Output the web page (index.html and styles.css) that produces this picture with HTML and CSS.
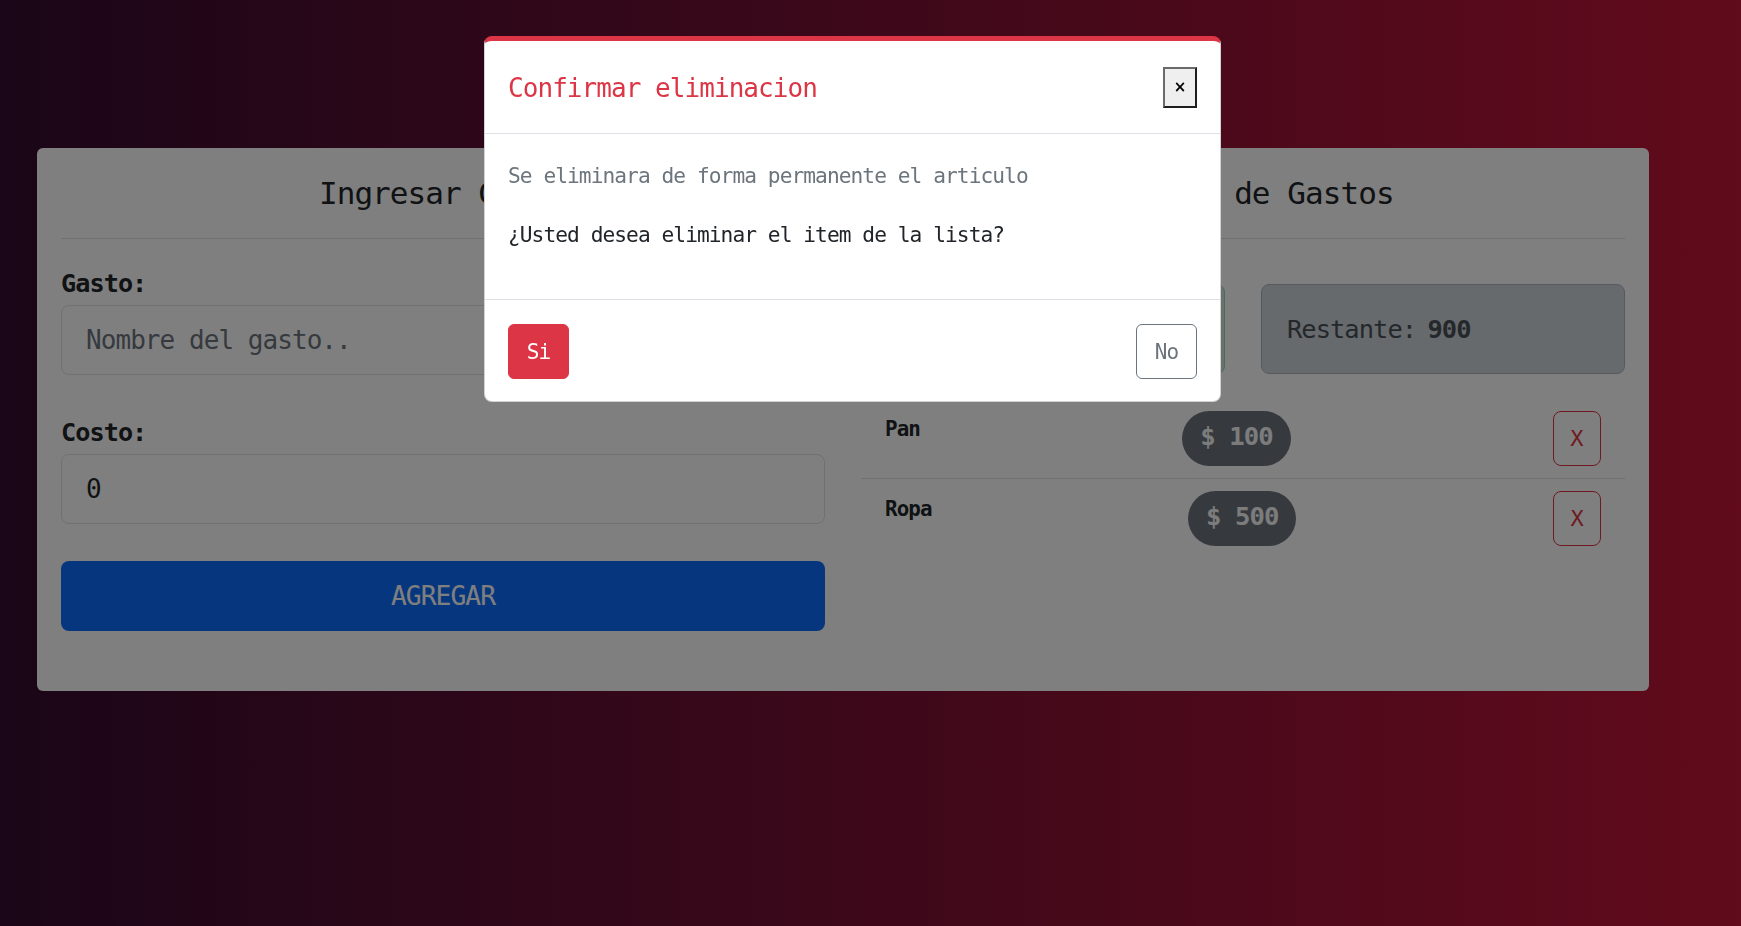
FILE: index.html
```html
<!DOCTYPE html>
<html lang="es">
<head>
<meta charset="utf-8">
<title>Gastos</title>
<link rel="stylesheet" href="styles.css">
</head>
<body>
<div class="page">
  <main class="card">
    <section class="col">
      <h2 class="col-title">Ingresar Gasto</h2>
      <form class="form">
        <label class="form-label" for="gasto">Gasto:</label>
        <input class="form-input" id="gasto" type="text" placeholder="Nombre del gasto..">
        <label class="form-label form-label-next" for="costo">Costo:</label>
        <input class="form-input" id="costo" type="text" value="0">
        <button type="button" class="btn-add">AGREGAR</button>
      </form>
    </section>
    <section class="col">
      <h2 class="col-title">Listado de Gastos</h2>
      <div class="summary">
        <div class="alert alert-budget">Presupuesto: <b>1500</b></div>
        <div class="alert alert-rest">Restante: <b>900</b></div>
      </div>
      <ul class="list">
        <li class="item">
          <span class="item-name">Pan</span>
          <span class="badge">$ 100</span>
          <button type="button" class="btn-del">X</button>
        </li>
        <li class="item">
          <span class="item-name">Ropa</span>
          <span class="badge">$ 500</span>
          <button type="button" class="btn-del">X</button>
        </li>
      </ul>
    </section>
  </main>
</div>

<div class="backdrop"></div>
<div class="modal" role="dialog">
  <div class="modal-header">
    <h5 class="modal-title">Confirmar eliminacion</h5>
    <button type="button" class="modal-close">×</button>
  </div>
  <div class="modal-body">
    <p class="muted">Se eliminara de forma permanente el articulo</p>
    <p>¿Usted desea eliminar el item de la lista?</p>
  </div>
  <div class="modal-footer">
    <button type="button" class="btn-yes">Si</button>
    <button type="button" class="btn-no">No</button>
  </div>
</div>
</body>
</html>
```

FILE: styles.css
```css
* { box-sizing: border-box; }

html, body { margin: 0; }

body {
  min-height: 100vh;
  font-family: "DejaVu Sans Mono", "Liberation Mono", monospace;
  letter-spacing: -0.059em;
  color: #212529;
  background: linear-gradient(to right, #340c30, #c21638);
}

.page {
  padding: 148px 0 0 37px;
}

.card {
  width: 1612px;
  background: #fff;
  border-radius: 6px;
  padding: 24px;
  display: grid;
  grid-template-columns: 1fr 1fr;
  column-gap: 36px;
  align-items: start;
}

.col-title {
  margin: 0;
  font-size: 31px;
  font-weight: 400;
  line-height: 42px;
  text-align: center;
  padding-bottom: 24px;
  border-bottom: 1px solid #dee2e6;
}

.form {
  display: flex;
  flex-direction: column;
  padding-bottom: 36px;
}

.form-label {
  display: block;
  margin-top: 25px;
  margin-bottom: 1px;
  font-size: 25.2px;
  font-weight: 700;
  line-height: 40px;
}

.form-label-next { margin-top: 38px; }

.form-input {
  height: 70px;
  width: 100%;
  border: 1px solid #dee2e6;
  border-radius: 8px;
  padding: 0 24px;
  font-family: inherit;
  letter-spacing: inherit;
  font-size: 26px;
  color: #212529;
  background: #fff;
}

.form-input::placeholder { color: #6c757d; }

.btn-add {
  margin-top: 37px;
  height: 70px;
  width: 100%;
  border: 0;
  border-radius: 8px;
  background: #0d6efd;
  color: #fff;
  font-family: inherit;
  letter-spacing: inherit;
  font-size: 26.3px;
}

.summary {
  margin-top: 45px;
  display: grid;
  grid-template-columns: 1fr 1fr;
  column-gap: 36px;
}

.alert {
  height: 90px;
  border: 1px solid;
  border-radius: 8px;
  padding: 0 25px;
  display: flex;
  align-items: center;
  font-size: 25.4px;
}

.alert-budget {
  background: #d1e7dd;
  border-color: #a3cfbb;
  color: #0a3622;
}

.alert-rest {
  background: #ced4da;
  border-color: #adb5bd;
  color: #495057;
}

.alert b { margin-left: 0.45em; }

.list {
  list-style: none;
  margin: 25px 0 0;
  padding: 0;
}

.item {
  display: flex;
  justify-content: space-between;
  align-items: flex-start;
  padding: 12px 24px;
  border-bottom: 1px solid #dee2e6;
}

.item:last-child { border-bottom: 0; }

.item-name {
  font-size: 20.9px;
  font-weight: 700;
  line-height: 36px;
}

.badge {
  height: 55px;
  padding: 0 18px 5px;
  border-radius: 28px;
  background: #6c757d;
  color: #f8f9fa;
  font-size: 25.6px;
  font-weight: 700;
  display: flex;
  align-items: center;
}

.btn-del {
  width: 48px;
  height: 55px;
  border: 1px solid #dc3545;
  border-radius: 8px;
  background: transparent;
  color: #dc3545;
  font-family: inherit;
  font-size: 22px;
  padding: 0;
}

/* modal */
.backdrop {
  position: fixed;
  inset: 0;
  background: rgba(0, 0, 0, 0.5);
}

.modal {
  position: fixed;
  left: 484px;
  top: 36px;
  width: 737px;
  background: #fff;
  border: 1px solid rgba(0, 0, 0, 0.175);
  border-top: 5px solid #dc3545;
  border-radius: 8px;
}

.modal-header {
  height: 93px;
  padding: 0 23px 0 23px;
  display: flex;
  align-items: center;
  justify-content: space-between;
  border-bottom: 1px solid #dee2e6;
}

.modal-title {
  margin: 0;
  padding-top: 4px;
  font-size: 26px;
  font-weight: 400;
  line-height: 1.2;
  color: #dc3545;
}

.modal-close {
  width: 34px;
  height: 41px;
  padding: 0;
  background: #efefef;
  border-style: solid;
  border-width: 2px;
  border-color: #6a6a6a #1e1e1e #1e1e1e #6a6a6a;
  font-family: "DejaVu Sans", sans-serif;
  letter-spacing: 0;
  font-size: 15px;
  font-weight: 700;
  color: #000;
}

.modal-body {
  padding: 24px 24px 23px 23px;
}

.modal-body p {
  margin: 0 0 24px;
  font-size: 21.2px;
  line-height: 35px;
}

.modal-body .muted { color: #6c757d; }

.modal-footer {
  border-top: 1px solid #dee2e6;
  padding: 24px 23px 22px;
  display: flex;
  justify-content: space-between;
}

.btn-yes,
.btn-no {
  width: 61px;
  height: 55px;
  border-radius: 6px;
  font-family: inherit;
  letter-spacing: inherit;
  font-size: 21px;
  padding: 0;
}

.btn-yes {
  background: #dc3545;
  border: 1px solid #dc3545;
  color: #fff;
}

.btn-no {
  background: #fff;
  border: 1px solid #6c757d;
  color: #6c757d;
}
```
